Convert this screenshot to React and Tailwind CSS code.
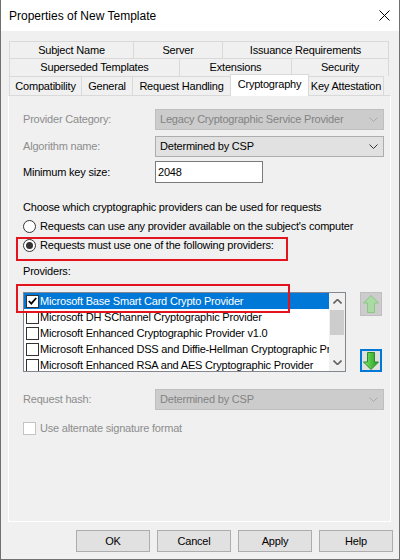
function Chevron({ up = false, className = "", strokeWidth = 1 }) {
  return (
    <svg width="9" height="5" viewBox="0 0 9 5" className={className}>
      <path
        d={up ? "M0.5 4.5 L4.5 0.5 L8.5 4.5" : "M0.5 0.5 L4.5 4.5 L8.5 0.5"}
        fill="none"
        stroke="currentColor"
        strokeWidth={strokeWidth}
      />
    </svg>
  );
}

function BlockArrow({ down = false, disabled = false }) {
  const id = down ? "gDown" : "gUp";
  const fill = disabled ? "#a9dba3" : `url(#${id})`;
  const stroke = disabled ? "#8cc585" : "#2b8a2b";
  const pts = down
    ? "8,17.5 15.5,10 11.5,10 11.5,0.5 4.5,0.5 4.5,10 0.5,10"
    : "8,0.5 15.5,8 11.5,8 11.5,17.5 4.5,17.5 4.5,8 0.5,8";
  return (
    <svg width="16" height="18" viewBox="0 0 16 18">
      <defs>
        <linearGradient id={id} x1="0" y1="0" x2="1" y2="0">
          <stop offset="0" stopColor="#8ee47e" />
          <stop offset="0.5" stopColor="#4cc23f" />
          <stop offset="1" stopColor="#2a9a2a" />
        </linearGradient>
      </defs>
      <polygon points={pts} fill={fill} stroke={stroke} strokeWidth="1" />
    </svg>
  );
}

function Tab({ w, label, last = false }) {
  return (
    <div
      className={`h-full flex items-center justify-center border-t border-l border-[#d9d9d9] ${
        last ? "border-r" : ""
      }`}
      style={{ width: w }}
    >
      {label}
    </div>
  );
}

function Dropdown({ value, disabled = false }) {
  return (
    <div
      className={`flex-1 h-full flex items-center justify-between pl-[4px] pr-[5px] border ${
        disabled
          ? "bg-[#cccccc] border-[#bfbfbf] text-[#838383]"
          : "bg-[#e1e1e1] border-[#adadad] text-black"
      }`}
    >
      <span>{value}</span>
      <Chevron className={disabled ? "text-[#a8a8a8]" : "text-[#333333]"} />
    </div>
  );
}

function ListItem({ label, checked = false, selected = false }) {
  return (
    <div
      className={`h-[16px] flex items-center pl-[2px] whitespace-nowrap ${
        selected ? "bg-[#0078d7] text-white" : "text-black"
      }`}
    >
      <div className="w-[13px] h-[13px] shrink-0 bg-white border border-[#333333] flex items-center justify-center">
        {checked && (
          <svg width="9" height="8" viewBox="0 0 9 8">
            <path d="M0.8 4 L3.3 6.6 L8.2 1" fill="none" stroke="#000" strokeWidth="1.8" />
          </svg>
        )}
      </div>
      <span className="ml-[1px]">{label}</span>
    </div>
  );
}

const providers = [
  "Microsoft DH SChannel Cryptographic Provider",
  "Microsoft Enhanced Cryptographic Provider v1.0",
  "Microsoft Enhanced DSS and Diffie-Hellman Cryptographic Provider",
  "Microsoft Enhanced RSA and AES Cryptographic Provider",
];

export default function App() {
  return (
    <div className="w-[400px] h-[560px] bg-[#f0f0f0] border-x border-b border-[#707070] flex flex-col font-['Liberation_Sans',Arial,sans-serif] text-[11px] tracking-[-0.2px] text-black overflow-hidden">
      {/* title bar */}
      <div className="h-[31px] shrink-0 bg-white flex items-center justify-between pl-[8px] pr-[9px]">
        <span className="text-[12px] tracking-normal">Properties of New Template</span>
        <svg width="11" height="11" viewBox="0 0 11 11">
          <path d="M0.5 0.5 L10.5 10.5 M10.5 0.5 L0.5 10.5" stroke="#000" strokeWidth="1" />
        </svg>
      </div>

      {/* tabs */}
      <div className="ml-[8px] mt-[10px] flex flex-col">
        <div className="flex h-[17px]">
          <Tab w={124} label="Subject Name" />
          <Tab w={89} label="Server" />
          <Tab w={167} label="Issuance Requirements" last />
        </div>
        <div className="flex h-[18px]">
          <Tab w={170} label="Superseded Templates" />
          <Tab w={112} label="Extensions" />
          <Tab w={98} label="Security" last />
        </div>
        <div className="flex h-[19px] items-start">
          <Tab w={72} label="Compatibility" />
          <Tab w={51} label="General" />
          <Tab w={98} label="Request Handling" />
          <div className="relative z-10 -mt-[2px] h-[22px] w-[79px] bg-white border-t border-x border-[#d9d9d9] flex items-center justify-center pb-[2px]">
            Cryptography
          </div>
          <div className="h-full w-[75px] flex items-center justify-center border-t border-r border-[#d9d9d9]">
            Key Attestation
          </div>
        </div>
      </div>

      {/* page */}
      <div className="relative ml-[7px] w-[383px] h-[427px] shrink-0 border border-white border-t-[#d9d9d9] pt-[13px] pl-[14px] pr-[6px] flex flex-col">
        <div className="flex items-center h-[21px]">
          <span className="w-[132px] text-[#8d8d8d]">Provider Category:</span>
          <Dropdown value="Legacy Cryptographic Service Provider" disabled />
        </div>
        <div className="flex items-center h-[21px] mt-[6px]">
          <span className="w-[132px] text-[#8d8d8d]">Algorithm name:</span>
          <Dropdown value="Determined by CSP" />
        </div>
        <div className="flex items-center h-[22px] mt-[4px]">
          <span className="w-[132px]">Minimum key size:</span>
          <div className="w-[108px] h-full bg-white border border-[#7a7a7a] flex items-center pl-[2px]">
            2048
          </div>
        </div>

        <div className="h-[16px] mt-[16px] flex items-center">
          Choose which cryptographic providers can be used for requests
        </div>
        <div className="h-[16px] mt-[3px] flex items-center">
          <div className="w-[13px] h-[13px] rounded-full bg-white border border-[#333333]" />
          <span className="ml-[4px]">
            Requests can use any provider available on the subject's computer
          </span>
        </div>
        <div className="h-[16px] mt-[3px] flex items-center">
          <div className="w-[13px] h-[13px] rounded-full bg-white border border-[#333333] flex items-center justify-center">
            <div className="w-[7px] h-[7px] rounded-full bg-[#333333]" />
          </div>
          <span className="ml-[4px]">Requests must use one of the following providers:</span>
        </div>

        <div className="h-[16px] mt-[10px] flex items-center">Providers:</div>

        <div className="flex mt-[13px] h-[80px]">
          <div className="w-[323px] h-full bg-white border border-[#828790] flex overflow-hidden">
            <div className="flex-1 overflow-hidden">
              <ListItem label="Microsoft Base Smart Card Crypto Provider" checked selected />
              {providers.map((p) => (
                <ListItem key={p} label={p} />
              ))}
            </div>
            <div className="w-[16px] h-full bg-[#f0f0f0] flex flex-col items-center">
              <div className="h-[17px] flex items-center justify-center">
                <Chevron up className="text-[#606060]" strokeWidth={1.6} />
              </div>
              <div className="w-[14px] h-[25px] bg-[#cdcdcd]" />
              <div className="flex-1" />
              <div className="h-[17px] flex items-center justify-center">
                <Chevron className="text-[#606060]" strokeWidth={1.6} />
              </div>
            </div>
          </div>
          <div className="ml-[14px] w-[22px] h-full flex flex-col justify-between">
            <div className="h-[24px] bg-[#cccccc] border border-[#bfbfbf] flex items-center justify-center">
              <BlockArrow disabled />
            </div>
            <div className="h-[23px] bg-[#e1e1e1] border-2 border-[#0078d7] flex items-center justify-center">
              <BlockArrow down />
            </div>
          </div>
        </div>

        <div className="flex items-center h-[21px] mt-[17px]">
          <span className="w-[132px] text-[#8d8d8d]">Request hash:</span>
          <Dropdown value="Determined by CSP" disabled />
        </div>
        <div className="h-[16px] mt-[10px] flex items-center">
          <div className="w-[13px] h-[13px] bg-white border border-[#c4c4c4]" />
          <span className="ml-[4px] text-[#8d8d8d]">Use alternate signature format</span>
        </div>

        {/* annotation boxes */}
        <div className="absolute left-[7px] top-[141px] w-[272px] h-[24px] border-2 border-[#e3141e]" />
        <div className="absolute left-[7px] top-[188px] w-[274px] h-[29px] border-2 border-[#e3141e]" />
      </div>

      {/* buttons */}
      <div className="mt-[8px] pr-[6px] flex justify-end gap-[7px]">
        {["OK", "Cancel", "Apply", "Help"].map((b) => (
          <button
            key={b}
            className="w-[74px] h-[22px] bg-[#e1e1e1] border border-[#adadad] flex items-center justify-center"
          >
            {b}
          </button>
        ))}
      </div>
    </div>
  );
}
